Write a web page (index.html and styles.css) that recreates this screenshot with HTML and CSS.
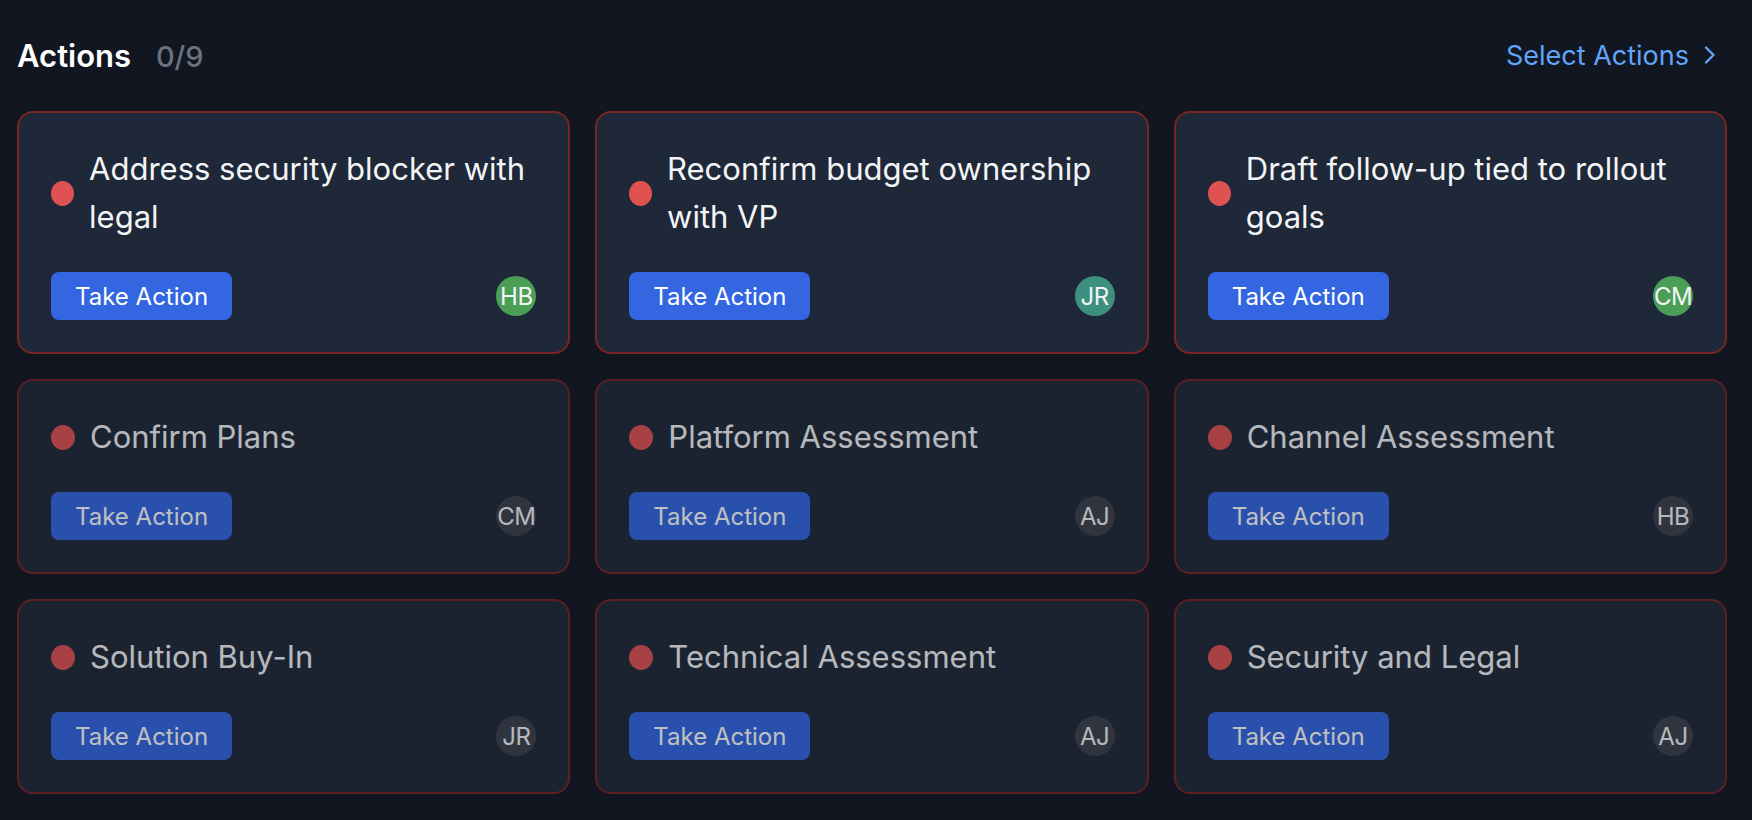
FILE: index.html
```html
<!DOCTYPE html>
<html>
<head>
  <meta charset="UTF-8" />
  <meta name="viewport" content="width=device-width, initial-scale=1.0" />
  <title>actions</title>
  <link rel="stylesheet" href="styles.css">
</head>
<body>
  <main class='page'>
    <header class='actionsHeader'>
      <h1>Actions <span class='count'>0/9</span></h1>
      <a class='selectLink' href='#'>
        Select Actions
        <svg width="14" height="20" viewBox="0 0 14 20" fill="none">
          <path d="M3 2.5L10.5 10L3 17.5" stroke="#60a5fa" stroke-width="2.4" stroke-linecap="round" stroke-linejoin="round"></path>
        </svg>
      </a>
    </header>

    <div class='grid'>
      <div class='card'>
        <div class='cardTitle'><span class='dot'></span><p>Address security blocker with legal</p></div>
        <div class='cardFooter'><button class='takeAction'>Take Action</button><span class='avatar green'>HB</span></div>
      </div>
      <div class='card'>
        <div class='cardTitle'><span class='dot'></span><p>Reconfirm budget ownership with VP</p></div>
        <div class='cardFooter'><button class='takeAction'>Take Action</button><span class='avatar teal'>JR</span></div>
      </div>
      <div class='card'>
        <div class='cardTitle'><span class='dot'></span><p>Draft follow-up tied to rollout goals</p></div>
        <div class='cardFooter'><button class='takeAction'>Take Action</button><span class='avatar green'>CM</span></div>
      </div>

      <div class='card muted'>
        <div class='cardTitle'><span class='dot'></span><p>Confirm Plans</p></div>
        <div class='cardFooter'><button class='takeAction'>Take Action</button><span class='avatar'>CM</span></div>
      </div>
      <div class='card muted'>
        <div class='cardTitle'><span class='dot'></span><p>Platform Assessment</p></div>
        <div class='cardFooter'><button class='takeAction'>Take Action</button><span class='avatar'>AJ</span></div>
      </div>
      <div class='card muted'>
        <div class='cardTitle'><span class='dot'></span><p>Channel Assessment</p></div>
        <div class='cardFooter'><button class='takeAction'>Take Action</button><span class='avatar'>HB</span></div>
      </div>

      <div class='card muted'>
        <div class='cardTitle'><span class='dot'></span><p>Solution Buy-In</p></div>
        <div class='cardFooter'><button class='takeAction'>Take Action</button><span class='avatar'>JR</span></div>
      </div>
      <div class='card muted'>
        <div class='cardTitle'><span class='dot'></span><p>Technical Assessment</p></div>
        <div class='cardFooter'><button class='takeAction'>Take Action</button><span class='avatar'>AJ</span></div>
      </div>
      <div class='card muted'>
        <div class='cardTitle'><span class='dot'></span><p>Security and Legal</p></div>
        <div class='cardFooter'><button class='takeAction'>Take Action</button><span class='avatar'>AJ</span></div>
      </div>
    </div>
  </main>
</body>
</html>
```

FILE: styles.css
```css
body {
  margin: 0;
  background-color: #111620;
  font-family: Inter, "Noto Sans", sans-serif;
  color: #f3f4f6;
}

.page {
  padding: 32px 25px 0 17px;
}

.actionsHeader {
  display: flex;
  justify-content: space-between;
  align-items: center;
  height: 46px;
  margin-bottom: 33px;
}

.actionsHeader h1 {
  margin: 0;
  font-size: 31px;
  font-weight: 600;
  color: #fff;
}

.count {
  margin-left: 17px;
  font-size: 29px;
  font-weight: 500;
  color: #6b7280;
}

.selectLink {
  display: flex;
  align-items: center;
  gap: 14px;
  margin-right: 10px;
  font-size: 27px;
  color: #60a5fa;
  text-decoration: none;
}

.grid {
  display: grid;
  grid-template-columns: repeat(3, 1fr);
  gap: 25px;
}

.card {
  background-color: #1f2838;
  border: 2px solid #7a2424;
  border-radius: 16px;
  padding: 32px;
}

.card.muted {
  opacity: 0.73;
}

.cardTitle {
  display: flex;
  align-items: center;
  gap: 15px;
}

.cardTitle p {
  margin: 0;
  font-size: 31px;
  line-height: 48px;
}

.dot {
  width: 24px;
  height: 25px;
  flex-shrink: 0.3;
  border-radius: 50%;
  background-color: #e05252;
}

.cardFooter {
  display: flex;
  justify-content: space-between;
  align-items: center;
  margin-top: 31px;
}

.takeAction {
  height: 48px;
  padding: 0 24px;
  border: none;
  border-radius: 8px;
  background-color: #3366e0;
  color: #fff;
  font-family: inherit;
  font-size: 24px;
}

.takeAction:hover {
  cursor: pointer;
}

.avatar {
  width: 40px;
  height: 40px;
  border-radius: 50%;
  display: flex;
  justify-content: center;
  align-items: center;
  background-color: #3b404b;
  font-size: 24px;
  letter-spacing: -0.5px;
}

.avatar.green {
  background-color: #4a9e55;
}

.avatar.teal {
  background-color: #3d9080;
}
```
